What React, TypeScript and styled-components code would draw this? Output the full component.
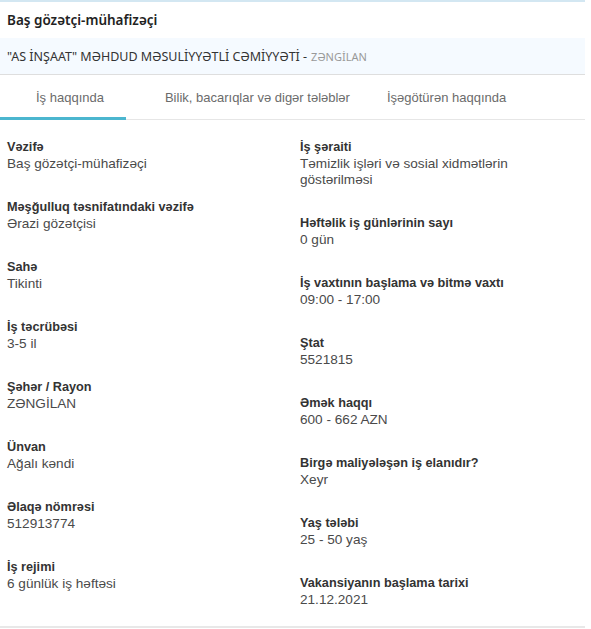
import styled, { createGlobalStyle } from "styled-components";

const GlobalStyle = createGlobalStyle`
  html, body {
    margin: 0;
    padding: 0;
    background: #ffffff;
  }
  body {
    font-family: "Liberation Sans", Arial, sans-serif;
  }
`;

interface Field {
  label: string;
  value: string;
}

const leftFields: Field[] = [
  { label: "Vəzifə", value: "Baş gözətçi-mühafizəçi" },
  { label: "Məşğulluq təsnifatındaki vəzifə", value: "Ərazi gözətçisi" },
  { label: "Sahə", value: "Tikinti" },
  { label: "İş təcrübəsi", value: "3-5 il" },
  { label: "Şəhər / Rayon", value: "ZƏNGİLAN" },
  { label: "Ünvan", value: "Ağalı kəndi" },
  { label: "Əlaqə nömrəsi", value: "512913774" },
  { label: "İş rejimi", value: "6 günlük iş həftəsi" },
];

const rightFields: Field[] = [
  { label: "İş şəraiti", value: "Təmizlik işləri və sosial xidmətlərin göstərilməsi" },
  { label: "Həftəlik iş günlərinin sayı", value: "0 gün" },
  { label: "İş vaxtının başlama və bitmə vaxtı", value: "09:00 - 17:00" },
  { label: "Ştat", value: "5521815" },
  { label: "Əmək haqqı", value: "600 - 662 AZN" },
  { label: "Birgə maliyələşən iş elanıdır?", value: "Xeyr" },
  { label: "Yaş tələbi", value: "25 - 50 yaş" },
  { label: "Vakansiyanın başlama tarixi", value: "21.12.2021" },
];

const tabs = [
  { title: "İş haqqında", offset: 36 },
  { title: "Bilik, bacarıqlar və digər tələblər", offset: 61 },
  { title: "İşəgötürən haqqında", offset: 37 },
];

const Card = styled.div`
  width: 585px;
  border-top: 2px solid #d3e7f2;
  border-bottom: 2px solid #e8e8e8;
  background: #fff;
`;

const Title = styled.h1`
  margin: 0;
  height: 36px;
  display: flex;
  align-items: center;
  padding: 0 7px;
  font-family: "Noto Sans", sans-serif;
  font-size: 13.5px;
  font-weight: 600;
  color: #222;
`;

const Company = styled.div`
  height: 36px;
  display: flex;
  align-items: center;
  padding: 0 7px;
  background: #f5faff;
  border-bottom: 1px solid #dedede;
  font-family: "Noto Sans", sans-serif;
  font-size: 12.5px;
  color: #333;
  span {
    font-size: 11px;
    color: #999;
    margin-left: 4px;
  }
`;

const TabBar = styled.div`
  position: relative;
  height: 44px;
  display: flex;
  align-items: center;
  border-bottom: 1px solid #e6e6e6;
  &::after {
    content: "";
    position: absolute;
    left: 0;
    bottom: -1px;
    width: 126px;
    height: 3px;
    background: #4bb6cf;
  }
`;

const Tab = styled.div<{ $offset: number }>`
  margin-left: ${(p) => p.$offset}px;
  font-size: 13px;
  color: #6b6b6b;
  white-space: nowrap;
`;

const Body = styled.div`
  display: grid;
  grid-template-columns: 293px 1fr;
  padding: 18px 7px 18px 7px;
`;

const Column = styled.div`
  display: flex;
  flex-direction: column;
  gap: 26px;
`;

const Item = styled.div`
  display: flex;
  flex-direction: column;
`;

const Label = styled.div`
  font-size: 12.7px;
  font-weight: bold;
  line-height: 18px;
  color: #333;
`;

const Value = styled.div`
  font-size: 13.6px;
  line-height: 16px;
  color: #4a4a4a;
  max-width: 280px;
`;

function FieldList({ fields }: { fields: Field[] }) {
  return (
    <Column>
      {fields.map((f) => (
        <Item key={f.label}>
          <Label>{f.label}</Label>
          <Value>{f.value}</Value>
        </Item>
      ))}
    </Column>
  );
}

export default function App() {
  return (
    <>
      <GlobalStyle />
      <Card>
        <Title>Baş gözətçi-mühafizəçi</Title>
        <Company>
          "AS İNŞAAT" MƏHDUD MƏSULİYYƏTLİ CƏMİYYƏTİ -<span>ZƏNGİLAN</span>
        </Company>
        <TabBar>
          {tabs.map((t) => (
            <Tab key={t.title} $offset={t.offset}>
              {t.title}
            </Tab>
          ))}
        </TabBar>
        <Body>
          <FieldList fields={leftFields} />
          <FieldList fields={rightFields} />
        </Body>
      </Card>
    </>
  );
}
